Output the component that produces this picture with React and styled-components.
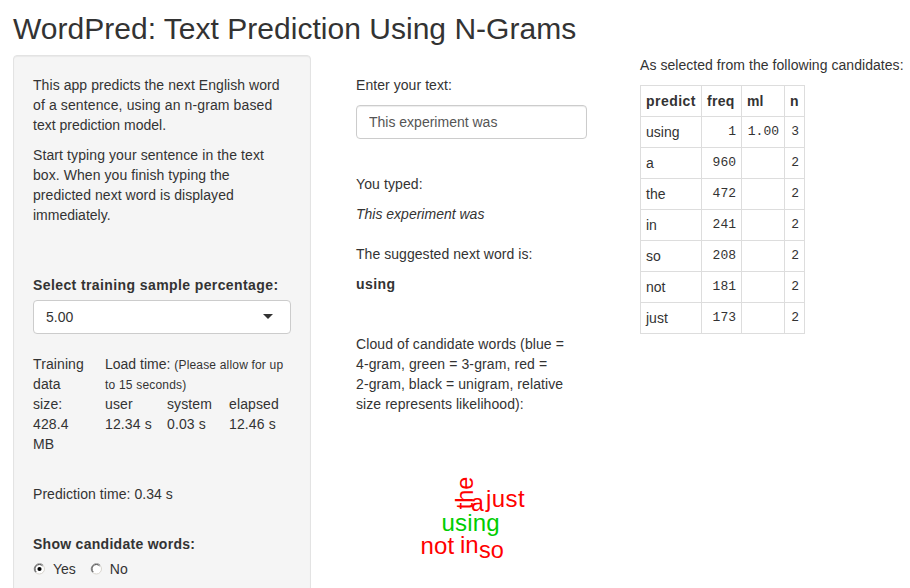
import React from "react";
import styled, { createGlobalStyle } from "styled-components";

const GlobalStyle = createGlobalStyle`
  *, *::before, *::after { box-sizing: border-box; }
  body {
    margin: 0;
    overflow: hidden;
    background: #fff;
    color: #333;
    font: 14px/20px "Liberation Sans", Arial, sans-serif;
  }
`;

const Page = styled.div`
  height: 588px;
  padding-left: 13px;
  overflow: hidden;
`;

const Title = styled.h2`
  margin: 0;
  height: 55px;
  padding-top: 12px;
  font-size: 30px;
  line-height: 33px;
  font-weight: 400;
  letter-spacing: 0.02px;
  white-space: nowrap;
`;

const Columns = styled.div`
  display: grid;
  grid-template-columns: 298px 231px 270px;
  column-gap: 45px;
  align-items: start;
`;

const Well = styled.aside`
  height: 560px;
  padding: 19px;
  background: #f5f5f5;
  border: 1px solid #e3e3e3;
  border-radius: 4px;
  box-shadow: inset 0 1px 1px rgba(0, 0, 0, 0.05);
`;

const Main = styled.main`
  padding-top: 20px;
`;

const Candidates = styled.section`
  margin-left: 8px;
`;

const Text = styled.p`
  margin: ${(p) => p.$top || 0}px 0 0;
  font-weight: ${(p) => (p.$bold ? 700 : 400)};
  font-style: ${(p) => (p.$italic ? "italic" : "normal")};
  letter-spacing: ${(p) => p.$track || 0}px;
  white-space: nowrap;
`;

const Line = styled.span`
  display: block;
  height: 20px;
  letter-spacing: ${(p) => p.$track || 0}px;
`;

const Select = styled.div`
  display: flex;
  align-items: center;
  justify-content: space-between;
  width: 258px;
  height: 34px;
  margin-top: 5px;
  padding: 0 17px 0 12px;
  background: #fff;
  border: 1px solid #ccc;
  border-radius: 4px;
`;

const Caret = styled.i`
  margin-bottom: 1px;
  border: 5px solid transparent;
  border-top-color: #333;
  border-bottom: 0;
`;

const Input = styled.input`
  display: block;
  width: 231px;
  height: 34px;
  margin-top: 10px;
  padding: 6px 12px;
  font: inherit;
  color: #555;
  background: #fff;
  border: 1px solid #ccc;
  border-radius: 4px;
  box-shadow: inset 0 1px 1px rgba(0, 0, 0, 0.075);
`;

const Stats = styled.div`
  display: grid;
  grid-template-columns: 72px 190px;
  margin-top: 20px;
`;

const Timing = styled.div`
  display: grid;
  grid-template-columns: repeat(3, 62px);
`;

const Small = styled.span`
  font-size: 12px;
  letter-spacing: ${(p) => p.$track || 0}px;
`;

const Radios = styled.div`
  display: flex;
  gap: 14px;
  margin-top: 5px;
`;

const RadioLabel = styled.label`
  display: flex;
  align-items: center;
  gap: 7px;
`;

const Table = styled.table`
  width: 165px;
  margin-top: 10px;
  table-layout: fixed;
  border-collapse: collapse;
`;

const Head = styled.th`
  width: ${(p) => p.$w}px;
  height: 31px;
  padding: 0 0 0 5px;
  border: 1px solid #ddd;
  text-align: left;
  white-space: nowrap;
  letter-spacing: ${(p) => p.$track || 0}px;
`;

const Cell = styled.td`
  height: 31px;
  padding: ${(p) => (p.$num ? "0 5px 1px 0" : "0 0 0 5px")};
  border: 1px solid #ddd;
  text-align: ${(p) => (p.$num ? "right" : "left")};
  font-family: ${(p) => (p.$num ? '"Liberation Mono", monospace' : "inherit")};
  font-size: ${(p) => (p.$num ? 13 : 14)}px;
  line-height: 20px;
`;

const Cloud = styled.div`
  position: relative;
  height: 160px;
  margin-top: 10px;
`;

const Word = styled.span`
  position: absolute;
  left: ${(p) => p.$x}px;
  top: ${(p) => p.$y}px;
  font-size: ${(p) => p.$size || 24}px;
  line-height: 24px;
  letter-spacing: ${(p) => p.$track || 0}px;
  color: ${(p) => p.$color || "#f00"};
  transform: ${(p) => (p.$up ? "rotate(-90deg)" : "none")};
  white-space: nowrap;
`;

const words = [
  { text: "the", x: 93, y: 57, up: true, size: 23.5 },
  { text: "a", x: 115, y: 67, size: 23 },
  { text: "just", x: 130, y: 63, track: 0.4 },
  { text: "using", x: 85.5, y: 87, color: "#00cd00", track: 0.2 },
  { text: "not", x: 64.5, y: 110, track: 0.2 },
  { text: "in", x: 104, y: 109 },
  { text: "so", x: 123, y: 114, size: 23.5 },
];

const rows = [
  ["using", "1", "1.00", "3"],
  ["a", "960", "", "2"],
  ["the", "472", "", "2"],
  ["in", "241", "", "2"],
  ["so", "208", "", "2"],
  ["not", "181", "", "2"],
  ["just", "173", "", "2"],
];

function Radio({ checked }) {
  return (
    <svg width="13" height="12" viewBox="0 0 13 12">
      <circle cx="6.5" cy="6" r="5" fill="#fff" />
      <path d="M2.7 9.6A5.2 5.2 0 0 1 10.3 2.2" fill="none" stroke="#999" />
      <path d="M3.2 9A4.4 4.4 0 0 1 9.6 2.9" fill="none" stroke="#444" />
      <path d="M10.2 2.5A5.1 5.1 0 0 1 3 9.7" fill="none" stroke="#d8d5ce" />
      {checked && <circle cx="6.5" cy="6" r="2.1" fill="#000" />}
    </svg>
  );
}

export default function App() {
  return (
    <Page>
      <GlobalStyle />
      <Title>WordPred: Text Prediction Using N-Grams</Title>
      <Columns>
        <Well>
          <Text>
            <Line $track={0.06}>This app predicts the next English word</Line>
            <Line $track={0.12}>of a sentence, using an n-gram based</Line>
            <Line>text prediction model.</Line>
          </Text>
          <Text $top={10}>
            <Line $track={0.1}>Start typing your sentence in the text</Line>
            <Line $track={0.07}>box. When you finish typing the</Line>
            <Line $track={0.05}>predicted next word is displayed</Line>
            <Line>immediately.</Line>
          </Text>
          <Text $top={50} $bold $track={0.4}>Select training sample percentage:</Text>
          <Select>
            5.00
            <Caret />
          </Select>
          <Stats>
            <Text $track={0.1}>
              Training<br />data<br />size:<br />428.4<br />MB
            </Text>
            <div>
              <Text>
                <Line>Load time: <Small $track={0.18}>(Please allow for up</Small></Line>
                <Line><Small $track={0.2}>to 15 seconds)</Small></Line>
              </Text>
              <Timing>
                <Text $track={0.12}>user<br />12.34 s</Text>
                <Text $track={0.12}>system<br />0.03 s</Text>
                <Text $track={0.12}>elapsed<br />12.46 s</Text>
              </Timing>
            </div>
          </Stats>
          <Text $top={30} $track={0.06}>Prediction time: 0.34 s</Text>
          <Text $top={30} $bold $track={0.28}>Show candidate words:</Text>
          <Radios>
            <RadioLabel><Radio checked />Yes</RadioLabel>
            <RadioLabel><Radio />No</RadioLabel>
          </Radios>
        </Well>
        <Main>
          <Text $track={0.06}>Enter your text:</Text>
          <Input defaultValue="This experiment was" />
          <Text $top={35} $track={0.1}>You typed:</Text>
          <Text $top={10} $italic>This experiment was</Text>
          <Text $top={20} $track={0.05}>The suggested next word is:</Text>
          <Text $top={10} $bold $track={0.4}>using</Text>
          <Text $top={40}>
            <Line $track={0.09}>Cloud of candidate words (blue =</Line>
            <Line $track={0.1}>4-gram, green = 3-gram, red =</Line>
            <Line $track={0.09}>2-gram, black = unigram, relative</Line>
            <Line $track={0.07}>size represents likelihood):</Line>
          </Text>
          <Cloud>
            {words.map((w) => (
              <Word
                key={w.text}
                $x={w.x}
                $y={w.y}
                $up={w.up}
                $color={w.color}
                $size={w.size}
                $track={w.track}
              >
                {w.text}
              </Word>
            ))}
          </Cloud>
        </Main>
        <Candidates>
          <Text $track={0.05}>As selected from the following candidates:</Text>
          <Table>
            <thead>
              <tr>
                <Head $w={61} $track={0.45}>predict</Head>
                <Head $w={40} $track={0.3}>freq</Head>
                <Head $w={43}>ml</Head>
                <Head $w={20}>n</Head>
              </tr>
            </thead>
            <tbody>
              {rows.map(([word, freq, ml, n]) => (
                <tr key={word}>
                  <Cell>{word}</Cell>
                  <Cell $num>{freq}</Cell>
                  <Cell $num>{ml}</Cell>
                  <Cell $num>{n}</Cell>
                </tr>
              ))}
            </tbody>
          </Table>
        </Candidates>
      </Columns>
    </Page>
  );
}
